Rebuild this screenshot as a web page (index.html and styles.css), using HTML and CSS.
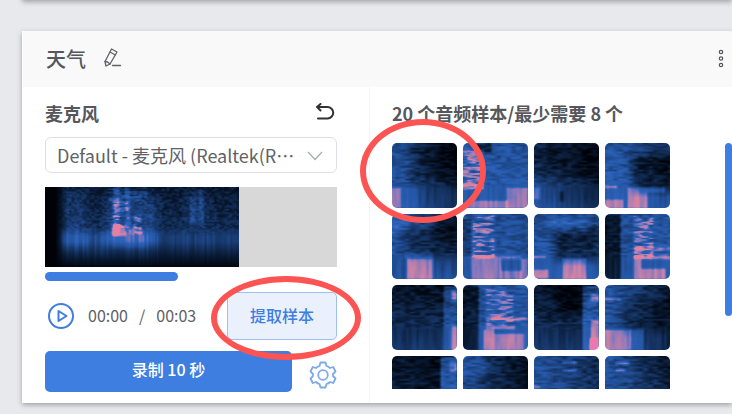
FILE: index.html
```html
<!DOCTYPE html>
<html lang="zh-CN">
  <head>
    <meta charset="UTF-8" />
    <meta name="viewport" content="width=device-width, initial-scale=1.0" />
    <title>天气</title>
    <link rel="stylesheet" href="styles.css">
  </head>
  <body>
    <section class="class-card previous-card"></section>

    <section class="class-card">
      <header class="card-header">
        <h2>天气</h2>
        <button type="button" class="icon-btn edit-btn" aria-label="重命名">
          <svg width="18" height="20" viewBox="0 0 18 20" fill="none" stroke="#606266" stroke-width="1.3" stroke-linejoin="round" stroke-linecap="round">
            <path d="M7.500 1 13 4 6 16 2 18 1 13.500Z" />
            <path d="M6 4 11.300 7M1 13.500 3.500 14 6 16M8.500 17.500H16.500" />
          </svg>
        </button>
        <button type="button" class="icon-btn more-btn" aria-label="更多">
          <svg width="6" height="20" viewBox="0 0 6 20" fill="none" stroke="#55575c" stroke-width="1.2">
            <circle cx="3" cy="3" r="1.700" />
            <circle cx="3" cy="9.500" r="1.700" />
            <circle cx="3" cy="16" r="1.700" />
          </svg>
        </button>
      </header>

      <div class="card-body">
        <div class="recorder">
          <div class="recorder-title">
            <h3><label for="micSelect">麦克风</label></h3>
            <button type="button" class="icon-btn" aria-label="返回">
              <svg width="20" height="20" viewBox="0 0 20 20" fill="none" stroke="#303133" stroke-width="2" stroke-linecap="round" stroke-linejoin="round">
                <path d="M5.500 1 2 4 5.500 7.500M2 4H12.500A5.700 5.700 0 0 1 12.500 15.500H3" />
              </svg>
            </button>
          </div>

          <div class="mic-select">
            <select id="micSelect">
              <option>Default - 麦克风 (Realtek(R) Audio)</option>
            </select>
            <svg class="chevron" width="16" height="10" viewBox="0 0 16 10" fill="none" stroke="#a8abb2" stroke-width="1.2">
              <path d="M1 1 8 8.500 15 1" />
            </svg>
          </div>

          <div class="spectrogram">
            <canvas id="recording" width="194" height="80"></canvas>
          </div>
          <div class="scroll-track"><div class="scroll-thumb"></div></div>

          <div class="player">
            <button type="button" class="icon-btn" aria-label="播放">
              <svg width="28" height="28" viewBox="0 0 28 28" fill="none" stroke="#3e7ee0" stroke-width="2" stroke-linejoin="round">
                <circle cx="14" cy="14" r="12" />
                <path d="M11.500 9 19.500 14 11.500 19Z" />
              </svg>
            </button>
            <div class="time"><span>00:00</span><span>/</span><span>00:03</span></div>
            <div class="extract">
              <button type="button" class="extract-btn">提取样本</button>
              <div class="mark mark-extract"></div>
            </div>
          </div>

          <div class="record-row">
            <button type="button" class="record-btn">录制 10 秒</button>
            <button type="button" class="icon-btn" aria-label="设置">
              <svg width="28" height="28" viewBox="0 0 28 28" fill="none" stroke="#7ea9ea" stroke-width="1.8" stroke-linejoin="round">
                <path d="M11.500 1.500H16.500L17.500 5Q19.500 5.500 21 7L24.200 6 26.500 10.500 24 13Q24.300 14 24 15L26.500 17.500 24.200 22 21 21Q19.500 22.500 17.500 23L16.500 26.500H11.500L10.500 23Q8.500 22.500 7 21L3.800 22 1.500 17.500 4 15Q3.700 14 4 13L1.500 10.500 3.800 6 7 7Q8.500 5.500 10.500 5Z" />
                <circle cx="14" cy="14" r="4.800" />
              </svg>
            </button>
          </div>
        </div>

        <div class="samples">
          <h3>20 个音频样本/最少需要 8 个</h3>
          <div class="sample-area">
            <div class="sample-list" id="sampleList"></div>
            <div class="list-scrollbar"></div>
            <div class="mark mark-sample"></div>
          </div>
        </div>
      </div>
    </section>

    <script src="script.js"></script>
  </body>
</html>
```
FILE: styles.css
```css
* {
  box-sizing: border-box;
}
body {
  margin: 0;
  padding: 0 0 11px 22px;
  background-color: #e8e9ed;
  color: #55575c;
  font-family: "Noto Sans CJK SC", sans-serif;
  font-size: 16px;
}
h2,
h3 {
  margin: 0;
  font-weight: 500;
}
h2 {
  font-size: 20px;
  line-height: 28px;
}
h3 {
  font-size: 18px;
  line-height: 24px;
  font-weight: bold;
}
button,
select {
  font-family: inherit;
  font-size: 16px;
  cursor: pointer;
}
svg,
canvas {
  display: block;
}
.class-card {
  background-color: #fff;
  border-left: 1px solid #fff;
  box-shadow: 0 2px 5px rgba(0, 0, 0, 0.3);
}
.previous-card {
  height: 20px;
  margin-top: -20px;
  margin-bottom: 31px;
}
.card-header {
  display: flex;
  align-items: center;
  gap: 18px;
  height: 56px;
  padding: 0 8px 0 23px;
  background-color: #f9f9f9;
}
.icon-btn {
  flex: none;
  padding: 0;
  border: none;
  background: none;
}
.edit-btn {
  padding-bottom: 2px;
}
.more-btn {
  margin-left: auto;
}
.card-body {
  display: flex;
}
.recorder {
  flex: none;
  width: 347px;
  padding: 14px 32px 11px 22px;
  border-right: 1px solid #f5f5f5;
}
.recorder-title {
  display: flex;
  align-items: center;
  justify-content: space-between;
  padding-right: 2px;
}
.mic-select {
  position: relative;
  margin-top: 12px;
}
.mic-select select {
  display: block;
  width: 100%;
  height: 36px;
  padding: 0 36px 0 11px;
  border: 1px solid #dcdfe6;
  border-radius: 6px;
  appearance: none;
  background-color: #fff;
  color: #606266;
  font-size: 18px;
  text-overflow: ellipsis;
}
.chevron {
  position: absolute;
  top: 14px;
  right: 14px;
  pointer-events: none;
}
.spectrogram {
  height: 80px;
  margin-top: 14px;
  background-color: #d8d8d8;
}
.scroll-track {
  margin: 5px 0 11px;
}
.scroll-thumb {
  width: 133px;
  height: 9px;
  border-radius: 5px;
  background-color: #3e7ee0;
}
.player {
  display: flex;
  align-items: center;
  padding-left: 2px;
}
.time {
  display: flex;
  gap: 11px;
  margin-left: 13px;
  padding-bottom: 2px;
  color: #606266;
}
.extract {
  position: relative;
  width: 110px;
  margin-left: auto;
}
.extract-btn {
  display: block;
  width: 100%;
  height: 48px;
  padding-bottom: 4px;
  border: 1px solid #9fbfef;
  border-radius: 5px;
  background-color: #ebf1fc;
  color: #3e7ee0;
  font-weight: 500;
}
.record-row {
  display: flex;
  align-items: center;
  gap: 17px;
  margin-top: 11px;
}
.record-row .icon-btn {
  padding-top: 6px;
}
.record-btn {
  flex: 1;
  height: 41px;
  padding-bottom: 6px;
  border: none;
  border-radius: 5px;
  background-color: #3e7ee0;
  color: #fff;
  font-weight: 500;
}
.samples {
  flex: 1;
  min-width: 0;
  padding: 14px 0 14px 22px;
}
.sample-area {
  position: relative;
  display: flex;
  justify-content: space-between;
  margin-top: 18px;
}
.sample-list {
  display: grid;
  grid-template-columns: repeat(4, 65px);
  gap: 6px;
  max-height: 246px;
  overflow: hidden;
}
.sample-list canvas {
  width: 65px;
  height: 65px;
  border-radius: 5px;
}
.list-scrollbar {
  width: 7px;
  height: 173px;
  border-radius: 4px;
  background-color: #3e7ee0;
}
.mark {
  position: absolute;
  border: 6px solid #fb5453;
  border-radius: 50%;
  pointer-events: none;
}
.mark-extract {
  top: -16px;
  left: -16px;
  width: 150px;
  height: 84px;
}
.mark-sample {
  top: -24px;
  left: -32px;
  width: 126px;
  height: 104px;
}
```
FILE: script.js
```javascript
// level -> colour
const COLORS = [
  [0, 0, 2, 8],
  [0.2, 8, 24, 48],
  [0.4, 22, 54, 104],
  [0.6, 36, 85, 163],
  [0.75, 46, 100, 188],
  [0.87, 130, 118, 188],
  [0.98, 206, 130, 166],
  [1.15, 232, 130, 155],
  [1.4, 236, 110, 200],
];

// corners: level at top left, top right, bottom left, bottom right
// spots: x, y, width, height, level to add, "s" for broken streaks, "d" for a wide soft patch
const SAMPLES = [
  { corners: [0.55, 0.05, 0.62, 0.35], spots: [[0, 44, 9, 21, 0.3], [9, 44, 17, 21, 0.12], [20, 0, 50, 40, -0.12, "d"]] },
  { corners: [0.6, 0.55, 0.65, 0.65], spots: [[0, 6, 20, 40, 0.28, "s"], [0, 41, 20, 4, 0.25], [43, 44, 22, 21, 0.28], [4, 57, 40, 8, 0.25], [12, 0, 16, 10, -0.3]] },
  { corners: [0.3, 0.08, 0.65, 0.3], spots: [[0, 44, 6, 12, 0.25], [0, 6, 65, 30, -0.12, "d"], [25, 48, 4, 10, -0.2]] },
  { corners: [0.6, 0.3, 0.7, 0.6], spots: [[22, 44, 20, 21, 0.32], [42, 44, 18, 5, 0.25], [0, 56, 18, 9, 0.25], [0, 42, 12, 3, 0.25], [28, 12, 40, 36, -0.3, "d"]] },
  { corners: [0.6, 0.05, 0.55, 0.6], spots: [[14, 44, 27, 21, 0.38], [12, 38, 28, 6, 0.15], [0, 4, 40, 14, 0.15, "d"], [10, 12, 55, 30, -0.15, "d"]] },
  { corners: [0.6, 0.5, 0.65, 0.6], spots: [[9, 0, 22, 44, 0.3, "s"], [8, 41, 30, 24, 0.28], [38, 41, 20, 4, 0.24], [38, 56, 20, 9, 0.25], [57, 44, 8, 21, 0.26], [0, 5, 8, 36, -0.2]] },
  { corners: [0.5, 0.45, 0.7, 0.65], spots: [[28, 44, 24, 21, 0.32], [0, 55, 14, 9, 0.28], [0, 41, 12, 3, 0.25], [20, 14, 45, 32, -0.3, "d"], [14, 2, 40, 14, 0.2, "d"]] },
  { corners: [0.5, 0.6, 0.6, 0.65], spots: [[0, 0, 15, 65, -0.38], [28, 0, 20, 44, 0.3, "s"], [30, 32, 35, 4, 0.25], [28, 41, 37, 4, 0.28], [28, 45, 8, 20, 0.3], [36, 54, 24, 11, 0.3]] },
  { corners: [0.15, 0.1, 0.42, 0.4], spots: [[51, 0, 14, 65, 0.3], [59, 5, 6, 10, 0.4], [59, 40, 6, 25, 0.3]] },
  { corners: [0.5, 0.6, 0.6, 0.65], spots: [[0, 0, 15, 65, -0.35], [22, 2, 28, 38, 0.25, "s"], [28, 32, 37, 3, 0.3], [22, 40, 30, 4, 0.28], [20, 44, 11, 21, 0.32], [31, 48, 30, 17, 0.28]] },
  { corners: [0.15, 0.05, 0.42, 0.38], spots: [[48, 0, 17, 65, 0.4], [56, 8, 9, 8, 0.3], [56, 34, 9, 31, 0.25], [55, 53, 8, 12, 0.3], [24, 0, 24, 30, -0.12, "d"]] },
  { corners: [0.6, 0.15, 0.6, 0.3], spots: [[0, 44, 26, 21, 0.36], [26, 44, 12, 21, 0.2], [0, 13, 15, 2, 0.35], [15, 16, 50, 30, -0.12, "d"]] },
  { corners: [0.15, 0.05, 0.3, 0.3], spots: [[48, 0, 17, 65, 0.45], [57, 5, 8, 10, 0.3]] },
  { corners: [0.5, 0.08, 0.5, 0.2], spots: [[0, 0, 26, 20, 0.15, "d"]] },
  { corners: [0.58, 0.3, 0.65, 0.3], spots: [[28, 5, 14, 2, 0.35], [28, 13, 14, 2, 0.4], [0, 29, 6, 3, 0.25]] },
  { corners: [0.6, 0.15, 0.65, 0.3], spots: [[10, 6, 14, 2, 0.35], [10, 13, 10, 2, 0.4]] },
  { corners: [0.4, 0.1, 0.6, 0.3], spots: [[0, 44, 12, 21, 0.3]] },
  { corners: [0.5, 0.2, 0.6, 0.4], spots: [[20, 44, 20, 21, 0.3]] },
  { corners: [0.3, 0.1, 0.5, 0.3], spots: [[50, 0, 15, 65, 0.3]] },
  { corners: [0.5, 0.4, 0.6, 0.5], spots: [[10, 44, 24, 21, 0.3]] },
];

function random(x, y, seed) {
  const n = Math.sin(x * 127.1 + y * 311.7 + seed * 74.7) * 43758.5453;
  return n - Math.floor(n);
}

function smoothNoise(x, y, seed) {
  const x0 = Math.floor(x);
  const y0 = Math.floor(y);
  const fx = x - x0;
  const fy = y - y0;
  const top = random(x0, y0, seed) * (1 - fx) + random(x0 + 1, y0, seed) * fx;
  const bottom = random(x0, y0 + 1, seed) * (1 - fx) + random(x0 + 1, y0 + 1, seed) * fx;
  return top * (1 - fy) + bottom * fy - 0.5;
}

function clamp(v) {
  return Math.max(0, Math.min(1, v));
}

function colorOf(level) {
  const v = Math.max(0, Math.min(1.39, level));
  const i = COLORS.findIndex((c) => c[0] > v);
  const a = COLORS[i - 1];
  const b = COLORS[i];
  const t = (v - a[0]) / (b[0] - a[0]);
  return [1, 2, 3].map((k) => a[k] + (b[k] - a[k]) * t);
}

function spotLevel(spots, x, y, seed) {
  let sum = 0;
  spots.forEach(([sx, sy, w, h, add, type]) => {
    const soft = type === "d" ? 12 : 3;
    // edges on the border of the canvas stay sharp
    const left = sx === 0 ? 99 : x - sx;
    const inX = clamp(Math.min(left, sx + w - x) / soft + 0.5);
    const inY = clamp(Math.min(y - sy, sy + h - y) / soft + 0.5);
    let k = inX * inY;
    if (type === "s") {
      k *= clamp(smoothNoise(x / 8, y / 1.6, seed + 9) * 4 + 0.6);
    }
    sum += add * k;
  });
  return sum;
}

function paint(canvas, levelAt) {
  const ctx = canvas.getContext("2d");
  const image = ctx.createImageData(canvas.width, canvas.height);
  for (let y = 0; y < canvas.height; y++) {
    for (let x = 0; x < canvas.width; x++) {
      const [r, g, b] = colorOf(levelAt(x, y));
      image.data.set([r, g, b, 255], (y * canvas.width + x) * 4);
    }
  }
  ctx.putImageData(image, 0, 0);
}

const list = document.getElementById("sampleList");
SAMPLES.forEach((sample, i) => {
  const canvas = document.createElement("canvas");
  canvas.width = 65;
  canvas.height = 65;
  list.appendChild(canvas);
  const [tl, tr, bl, br] = sample.corners;
  paint(canvas, (x, y) => {
    const u = x / 65;
    const v = y / 65;
    const base = (tl * (1 - u) + tr * u) * (1 - v) + (bl * (1 - u) + br * u) * v;
    const low = clamp((y - 38) / 8);
    const noise =
      smoothNoise(x / 5, y / 1.8, i) * 0.28 * (1 - low) +
      smoothNoise(x / 2.5, y / 18, i) * 0.14 * low;
    return base + noise + spotLevel(sample.spots, x, y, i);
  });
});

const SPEECH = [
  [12, 0, 30, 60, 0.12, "d"],
  [60, 6, 52, 52, 0.18, "d"],
  [62, 0, 40, 14, 0.15, "s"],
  [68, 0, 6, 48, 0.22],
  [80, 0, 5, 40, 0.2],
  [67, 14, 16, 26, 0.3, "s"],
  [66, 38, 15, 10, 0.35],
  [82, 40, 5, 7, 0.25],
  [88, 28, 8, 18, 0.35, "s"],
  [87, 40, 10, 7, 0.25],
  [67, 47, 32, 14, 0.06],
  [140, 5, 24, 34, 0.1, "d"],
  [145, 10, 6, 25, 0.15],
  [153, 3, 5, 32, 0.15],
];

paint(document.getElementById("recording"), (x, y) => {
  const fadeIn = clamp((x - 10) / 12);
  const fadeOut = clamp((82 - y) / 28);
  const low = clamp((y - 40) / 9);
  const bright = x < 110 ? 0.55 : 0.45;
  const high = 0.2 + (y / 47) * 0.14 + smoothNoise(x / 2.5, y / 1.6, 40) * 0.24;
  const bars = bright + smoothNoise(x / 2, y / 60, 41) * 0.16;
  return (high * (1 - low) + bars * low + spotLevel(SPEECH, x, y, 40)) * fadeIn * fadeOut;
});
```
